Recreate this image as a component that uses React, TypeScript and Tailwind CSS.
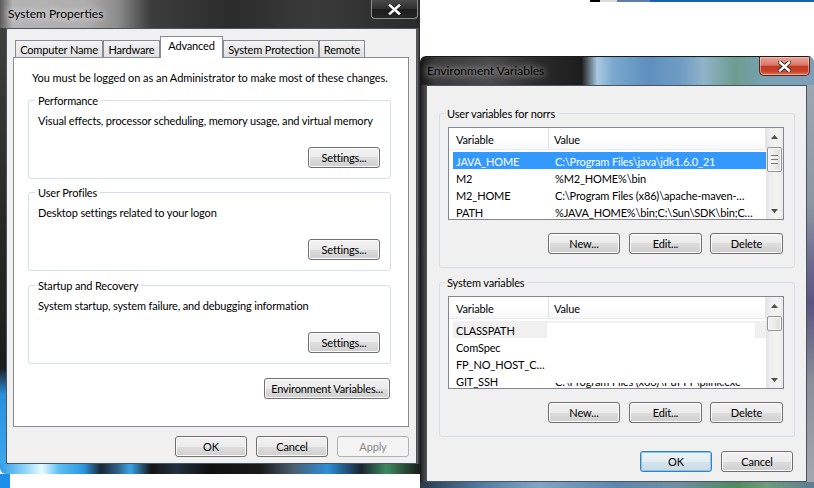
import React from "react";

type BtnKind = "normal" | "default" | "disabled";

function Btn({
  children,
  className = "",
  kind = "normal",
}: {
  children: React.ReactNode;
  className?: string;
  kind?: BtnKind;
}) {
  const k =
    kind === "default"
      ? "border-[#3c7fb1] bg-[linear-gradient(#edf4f8_0%,#e4edf3_50%,#d4e2eb_50%,#cbdbe6_100%)] shadow-[inset_0_0_0_1px_#7fcaf2] text-black"
      : kind === "disabled"
      ? "border-[#adb2b5] bg-[#f4f4f4] text-[#8a8a8a]"
      : "border-[#707070] bg-[linear-gradient(#f2f2f2_0%,#ebebeb_50%,#dddddd_50%,#cfcfcf_100%)] shadow-[inset_0_0_0_1px_#fcfcfc] text-black";
  return (
    <div
      className={`flex h-[21px] shrink-0 items-center justify-center whitespace-nowrap rounded-[3px] border leading-none ${k} ${className}`}
    >
      {children}
    </div>
  );
}

function Tab({ label, className, selected }: { label: string; className: string; selected?: boolean }) {
  if (selected) {
    return (
      <div
        className={`relative z-10 -mb-px flex h-[22px] shrink-0 items-start justify-center whitespace-nowrap border border-b-0 border-[#898c95] bg-white pt-[1px] leading-[15px] ${className}`}
      >
        {label}
      </div>
    );
  }
  return (
    <div
      className={`flex h-[17px] shrink-0 items-center justify-center whitespace-nowrap border border-b-0 border-[#898c95] bg-[linear-gradient(#f4f4f4_0%,#e9e9e9_50%,#e1e1e1_100%)] leading-[15px] ${className}`}
    >
      {label}
    </div>
  );
}

function Group({
  label,
  legendClass,
  className,
  children,
}: {
  label: string;
  legendClass: string;
  className: string;
  children: React.ReactNode;
}) {
  return (
    <fieldset className={`rounded-[3px] border border-[#d5dfe5] ${className}`}>
      <legend className={`whitespace-nowrap px-[3px] leading-[15px] ${legendClass}`}>{label}</legend>
      {children}
    </fieldset>
  );
}

function Arrow({ down }: { down?: boolean }) {
  return (
    <svg width="7" height="4" viewBox="0 0 7 4">
      <path d={down ? "M0 0L3.5 4L7 0Z" : "M0 4L3.5 0L7 4Z"} fill="#4d4d4d" />
    </svg>
  );
}

function Scrollbar({ thumbClass, grip }: { thumbClass: string; grip: boolean }) {
  return (
    <div className="flex w-[17px] shrink-0 flex-col bg-[linear-gradient(90deg,#e3e3e3_0%,#efefef_25%,#f3f3f3_75%,#e9e9e9_100%)]">
      <div className="flex h-[17px] shrink-0 items-center justify-center">
        <Arrow />
      </div>
      <div
        className={`mx-[1px] mt-[2px] flex shrink-0 flex-col items-center justify-center gap-[1px] rounded-[2px] border border-[#969696] bg-[linear-gradient(90deg,#f5f5f5_0%,#ebebeb_50%,#dcdcdc_100%)] shadow-[inset_0_0_0_1px_#fbfbfb] ${thumbClass}`}
      >
        {grip && (
          <>
            <div className="h-[1px] w-[7px] bg-[#7a7a7a]" />
            <div className="h-[1px] w-[7px] bg-[#fdfdfd]" />
            <div className="h-[1px] w-[7px] bg-[#7a7a7a]" />
            <div className="h-[1px] w-[7px] bg-[#fdfdfd]" />
            <div className="h-[1px] w-[7px] bg-[#7a7a7a]" />
          </>
        )}
      </div>
      <div className="flex-1" />
      <div className="flex h-[17px] shrink-0 items-center justify-center">
        <Arrow down />
      </div>
    </div>
  );
}

type Row = { name: string; value: string; sel?: boolean; hover?: boolean };

function ListView({
  rows,
  thumbClass,
  grip,
  redact,
}: {
  rows: Row[];
  thumbClass: string;
  grip: boolean;
  redact?: boolean;
}) {
  return (
    <div className="relative flex h-[93px] w-[336px] overflow-hidden border border-[#828790] bg-white">
      <div className="flex w-[317px] shrink-0 flex-col">
        <div className="flex h-[22px] shrink-0 border-b border-[#ececec] bg-[linear-gradient(#ffffff_0%,#ffffff_50%,#f6f7f8_100%)]">
          <div className="flex w-[100px] shrink-0 items-center border-r border-[#e3e3e3] pl-[7px] pt-[4px]">
            Variable
          </div>
          <div className="flex flex-1 items-center border-r border-[#e3e3e3] pl-[5px] pt-[4px]">Value</div>
        </div>
        <div className="flex flex-col pl-[4px] pt-[2px]">
          {rows.map((r) => (
            <div
              key={r.name}
              className={`flex h-[17px] shrink-0 pt-[3px] leading-[14px] ${
                r.sel ? "bg-[#3399ff] text-white" : r.hover ? "bg-[#f0f0f0]" : ""
              }`}
            >
              <div className="w-[96px] shrink-0 overflow-hidden whitespace-nowrap pl-[3px]">{r.name}</div>
              <div className="flex-1 overflow-hidden whitespace-nowrap pl-[6px]">{r.value}</div>
            </div>
          ))}
        </div>
      </div>
      <Scrollbar thumbClass={thumbClass} grip={grip} />
      {redact && <div className="absolute left-[98px] top-[26px] h-[60px] w-[208px] bg-white" />}
    </div>
  );
}

function CloseX() {
  return (
    <svg width="13" height="11" viewBox="0 0 13 11">
      <path d="M2 1.5L11 9.5M11 1.5L2 9.5" stroke="#2b2b2b" strokeWidth="4.2" strokeLinecap="square" />
      <path d="M2 1.5L11 9.5M11 1.5L2 9.5" stroke="#ffffff" strokeWidth="2.4" strokeLinecap="square" />
    </svg>
  );
}

function SysProps() {
  return (
    <div className="absolute left-0 top-0 flex h-[474px] w-[420px] flex-col overflow-hidden rounded-bl-[6px]">
      <div className="relative flex h-[28px] shrink-0 items-center pl-[8px] bg-[linear-gradient(90deg,#5a5a5a_0%,#b4b4b4_3%,#aeaeae_20%,#8c8c8c_28%,#3c3c3c_36%,#2c2c2c_55%,#3a3a3a_75%,#2a2a2a_100%)]">
        <span className="text-[12px] leading-none tracking-normal text-black [text-shadow:0_0_6px_#e8e8e8,0_0_10px_#d0d0d0]">
          System Properties
        </span>
        <div className="absolute right-[2px] top-0 flex h-[19px] w-[47px] items-center justify-center rounded-b-[4px] border border-t-0 border-[#8d8d8d] bg-[linear-gradient(#4a4a4a_0%,#2e2e2e_50%,#1c1c1c_50%,#262626_100%)]">
          <CloseX />
        </div>
      </div>
      <div className="flex h-[436px] shrink-0">
        <div className="w-[6px] shrink-0 bg-[linear-gradient(180deg,#3f3f3f_0%,#2a2a2a_40%,#1d1d1d_78%,#2a8fdc_84%,#3aa8ef_100%)]" />
        <div className="flex w-[411px] shrink-0 flex-col border border-[#4b5561] bg-[#f0f0f0] pl-[6px] pr-[7px] pt-[7px]">
          <div className="flex h-[21px] shrink-0 items-end pl-[2px]">
            <Tab label="Computer Name" className="w-[88px]" />
            <Tab label="Hardware" className="w-[57px]" />
            <Tab label="Advanced" className="w-[63px]" selected />
            <Tab label="System Protection" className="w-[96px]" />
            <Tab label="Remote" className="w-[46px]" />
          </div>
          <div className="flex h-[370px] shrink-0 flex-col border border-[#898c95] bg-white pl-[14px] pr-[17px] pt-[12px]">
            <div className="whitespace-nowrap pl-[4px] leading-[15px] tracking-[-0.06px]">
              You must be logged on as an Administrator to make most of these changes.
            </div>
            <Group label="Performance" legendClass="-ml-[3px]" className="mt-[8px] pb-[10px] pl-[9px] pr-[10px] pt-[5px]">
              <div className="whitespace-nowrap leading-[15px]">
                Visual effects, processor scheduling, memory usage, and virtual memory
              </div>
              <div className="mt-[19px] flex justify-end">
                <Btn className="w-[72px]">Settings...</Btn>
              </div>
            </Group>
            <Group label="User Profiles" legendClass="-ml-[3px]" className="mt-[6px] pb-[10px] pl-[9px] pr-[10px] pt-[5px]">
              <div className="whitespace-nowrap leading-[15px]">Desktop settings related to your logon</div>
              <div className="mt-[19px] flex justify-end">
                <Btn className="w-[72px]">Settings...</Btn>
              </div>
            </Group>
            <Group label="Startup and Recovery" legendClass="-ml-[3px]" className="mt-[7px] pb-[10px] pl-[9px] pr-[10px] pt-[5px]">
              <div className="whitespace-nowrap leading-[15px]">
                System startup, system failure, and debugging information
              </div>
              <div className="mt-[19px] flex justify-end">
                <Btn className="w-[72px]">Settings...</Btn>
              </div>
            </Group>
            <div className="mt-[14px] flex justify-end pr-[1px]">
              <Btn className="w-[126px]">Environment Variables...</Btn>
            </div>
          </div>
          <div className="mt-[9px] flex justify-end gap-[9px]">
            <Btn className="w-[72px]">OK</Btn>
            <Btn className="w-[72px]">Cancel</Btn>
            <Btn className="w-[72px]" kind="disabled">
              Apply
            </Btn>
          </div>
        </div>
        <div className="w-[3px] shrink-0 bg-[linear-gradient(90deg,#6a6a6a,#1e1e1e)]" />
      </div>
      <div className="h-[10px] shrink-0 bg-[linear-gradient(90deg,#2f9de6_0%,#8fd6f8_6%,#e6fbff_10%,#5cc0f3_14%,#2a94e0_20%,#1b2a36_24%,#2f5f85_28%,#38a6ec_31%,#141414_36%,#1f3142_42%,#101010_50%,#1a1a1a_62%,#4a6070_70%,#2b8fdb_78%,#1a2430_86%,#3c8a5c_92%,#1a1a1a_100%)]" />
    </div>
  );
}

function EnvVars() {
  const userRows: Row[] = [
    { name: "JAVA_HOME", value: "C:\\Program Files\\java\\jdk1.6.0_21", sel: true },
    { name: "M2", value: "%M2_HOME%\\bin" },
    { name: "M2_HOME", value: "C:\\Program Files (x86)\\apache-maven-…" },
    { name: "PATH", value: "%JAVA_HOME%\\bin;C:\\Sun\\SDK\\bin;C…" },
  ];
  const sysRows: Row[] = [
    { name: "CLASSPATH", value: "", hover: true },
    { name: "ComSpec", value: "" },
    { name: "FP_NO_HOST_C…", value: "" },
    { name: "GIT_SSH", value: "C:\\Program Files (x86)\\PuTTY\\plink.exe" },
  ];
  return (
    <div className="absolute left-[420px] top-[56px] flex h-[432px] w-[394px] flex-col overflow-hidden rounded-t-[6px]">
      <div className="relative flex h-[29px] shrink-0 items-center border-t border-[#1a1a1a] pl-[7px] bg-[linear-gradient(90deg,#161616_0%,#3a3a3a_4%,#4a4a4a_18%,#2a2a2a_30%,#1d1d1d_41%,#a9c9e2_45%,#7aa8cf_49%,#5e8fbd_58%,#6f9cc4_66%,#8fb3c9_72%,#6c9d8f_80%,#79a3b5_88%,#7f9fb8_100%)]">
        <span className="text-[12px] leading-none tracking-normal text-black [text-shadow:0_0_6px_#bdbdbd,0_0_10px_#9a9a9a]">
          Environment Variables
        </span>
        <div className="absolute right-[4px] top-0 flex h-[19px] w-[51px] items-center justify-center rounded-b-[5px] border border-t-0 border-[#5a2420] bg-[linear-gradient(#e9a595_0%,#d8776a_45%,#c2391f_52%,#c5432b_80%,#df7a5e_100%)] shadow-[inset_0_0_0_1px_rgba(255,220,210,0.5)]">
          <CloseX />
        </div>
      </div>
      <div className="flex h-[397px] shrink-0">
        <div className="w-[6px] shrink-0 bg-[linear-gradient(90deg,#141414_0%,#2e2e2e_30%,#4a4a4a_100%)]" />
        <div className="flex w-[381px] shrink-0 flex-col border border-[#4b5561] bg-[#f0f0f0] pl-[12px] pr-[11px] pt-[20px]">
          <Group label="User variables for norrs" legendClass="-ml-[4px]" className="pb-[13px] pl-[8px] pr-[10px] pt-[6px]">
            <ListView rows={userRows} thumbClass="h-[25px]" grip />
            <div className="mr-[1px] mt-[13px] flex justify-end">
              <Btn className="w-[72px]">New...</Btn>
              <Btn className="ml-[9px] w-[73px]">Edit...</Btn>
              <Btn className="ml-[8px] w-[73px]">Delete</Btn>
            </div>
          </Group>
          <Group label="System variables" legendClass="-ml-[4px]" className="mt-[7px] pb-[13px] pl-[8px] pr-[10px] pt-[6px]">
            <ListView rows={sysRows} thumbClass="h-[15px]" grip={false} redact />
            <div className="mr-[1px] mt-[13px] flex justify-end">
              <Btn className="w-[72px]">New...</Btn>
              <Btn className="ml-[9px] w-[73px]">Edit...</Btn>
              <Btn className="ml-[8px] w-[73px]">Delete</Btn>
            </div>
          </Group>
          <div className="mt-[14px] flex justify-end gap-[9px] pr-[2px]">
            <Btn className="w-[72px]" kind="default">
              OK
            </Btn>
            <Btn className="w-[72px]">Cancel</Btn>
          </div>
        </div>
        <div className="w-[7px] shrink-0 bg-[linear-gradient(180deg,#9aa6b0_0%,#8d96a0_30%,#6e6a8e_45%,#5b5480_55%,#8a8f98_75%,#a3a8ad_100%)]" />
      </div>
      <div className="h-[6px] shrink-0 bg-[linear-gradient(90deg,#2a3a4a_0%,#4f79a0_15%,#7fa5c6_30%,#5d86ad_50%,#6e8fa5_65%,#4f8a60_80%,#6d9c7a_88%,#5f7d95_100%)]" />
    </div>
  );
}

export default function App() {
  return (
    <div className="relative h-[488px] w-[814px] overflow-hidden bg-white font-['Lato',sans-serif] text-[11px] tracking-[-0.15px] text-black">
      <div className="absolute left-[590px] top-0 flex h-[2px] w-[224px]">
        <div className="w-[10px] bg-black" />
        <div className="w-[17px] bg-[#dcdcdc]" />
        <div className="w-[33px] bg-[#5b7fa8]" />
        <div className="flex-1 bg-[#1660b0]" />
      </div>
      <div className="absolute left-0 top-[474px] h-[14px] w-[10px] bg-[#1e8fe8]" />
      <SysProps />
      <EnvVars />
    </div>
  );
}
